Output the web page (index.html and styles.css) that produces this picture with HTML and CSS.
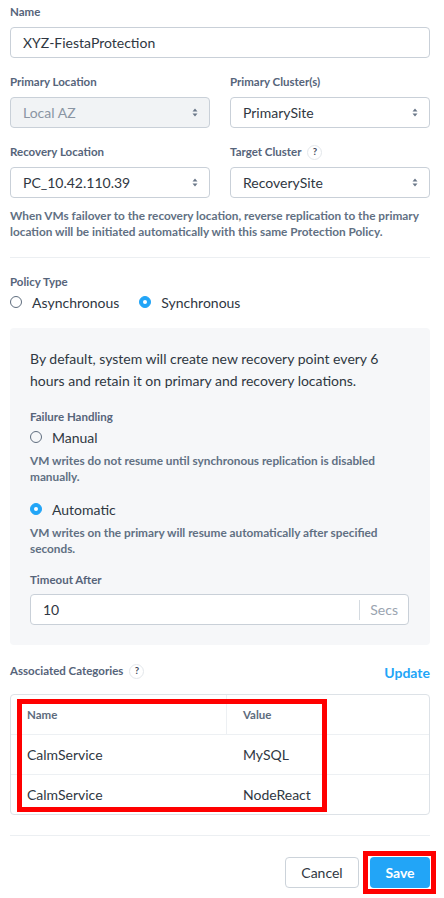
FILE: index.html
```html
<!DOCTYPE html>
<html>
<head>
<meta charset="utf-8">
<link rel="stylesheet" href="styles.css">
</head>
<body>
<div class="form">
  <div class="lbl">Name</div>
  <div class="input">XYZ-FiestaProtection</div>

  <div class="row2">
    <div class="col">
      <div class="lbl">Primary Location</div>
      <div class="select disabled"><span>Local AZ</span>
        <svg class="arrows" width="6" height="9" viewBox="0 0 6 9"><path d="M3 0.5L5.5 3.5H0.5Z M3 8.5L5.5 5.5H0.5Z" fill="#6b7889"/></svg>
      </div>
    </div>
    <div class="col">
      <div class="lbl">Primary Cluster(s)</div>
      <div class="select"><span>PrimarySite</span>
        <svg class="arrows" width="6" height="9" viewBox="0 0 6 9"><path d="M3 0.5L5.5 3.5H0.5Z M3 8.5L5.5 5.5H0.5Z" fill="#6b7889"/></svg>
      </div>
    </div>
  </div>

  <div class="row2">
    <div class="col">
      <div class="lbl">Recovery Location</div>
      <div class="select"><span>PC_10.42.110.39</span>
        <svg class="arrows" width="6" height="9" viewBox="0 0 6 9"><path d="M3 0.5L5.5 3.5H0.5Z M3 8.5L5.5 5.5H0.5Z" fill="#6b7889"/></svg>
      </div>
    </div>
    <div class="col">
      <div class="lbl">Target Cluster <span class="help">?</span></div>
      <div class="select"><span>RecoverySite</span>
        <svg class="arrows" width="6" height="9" viewBox="0 0 6 9"><path d="M3 0.5L5.5 3.5H0.5Z M3 8.5L5.5 5.5H0.5Z" fill="#6b7889"/></svg>
      </div>
    </div>
  </div>

  <p class="hint first">When VMs failover to the recovery location, reverse replication to the primary location will be initiated automatically with this same Protection Policy.</p>

  <hr class="divider">

  <div class="lbl policy">Policy Type</div>
  <div class="radios">
    <label class="radio"><span class="dot"></span>Asynchronous</label>
    <label class="radio"><span class="dot on"></span>Synchronous</label>
  </div>

  <div class="panel">
    <p class="desc">By default, system will create new recovery point every 6 hours and retain it on primary and recovery locations.</p>
    <div class="lbl fh">Failure Handling</div>
    <label class="radio opt"><span class="dot"></span>Manual</label>
    <p class="hint sub">VM writes do not resume until synchronous replication is disabled manually.</p>
    <label class="radio opt auto"><span class="dot on"></span>Automatic</label>
    <p class="hint sub">VM writes on the primary will resume automatically after specified seconds.</p>
    <div class="lbl timeout">Timeout After</div>
    <div class="input suffix-input"><span class="val">10</span><span class="suffix">Secs</span></div>
  </div>

  <div class="cat-head">
    <div class="lbl">Associated Categories <span class="help">?</span></div>
    <a class="update">Update</a>
  </div>

  <div class="table">
    <div class="tr th"><div class="td name">Name</div><div class="td val">Value</div></div>
    <div class="tr"><div class="td name">CalmService</div><div class="td val">MySQL</div></div>
    <div class="tr"><div class="td name">CalmService</div><div class="td val">NodeReact</div></div>
    <div class="mark"></div>
  </div>

  <hr class="divider bottom">

  <div class="actions">
    <button class="btn cancel">Cancel</button>
    <div class="save-mark"><button class="btn save">Save</button></div>
  </div>
</div>
</body>
</html>
```

FILE: styles.css
```css
* { box-sizing: border-box; }
html, body { margin: 0; padding: 0; background: #fff; }
body {
  font-family: "Lato", "Open Sans", sans-serif;
  color: #2e3440;
  width: 444px;
}
.form {
  width: 420px;
  margin-left: 10px;
  padding-top: 5px;
}
.lbl {
  font-size: 11.5px;
  font-weight: 700;
  color: #56647a;
  line-height: 14px;
  height: 14px;
  display: flex;
  align-items: center;
}
.input {
  margin-top: 8px;
  height: 31px;
  border: 1px solid #c9d0d8;
  border-radius: 4px;
  padding: 0 12px;
  display: flex;
  align-items: center;
  font-size: 14px;
  color: #2f3742;
  background: #fff;
}
.row2 {
  display: grid;
  grid-template-columns: 200px 200px;
  column-gap: 20px;
  margin-top: 17px;
}
.select {
  margin-top: 8px;
  height: 31px;
  border: 1px solid #c9d0d8;
  border-radius: 4px;
  padding: 0 10px 0 12px;
  display: flex;
  align-items: center;
  justify-content: space-between;
  font-size: 14px;
  color: #2f3742;
  background: #fff;
}
.select.disabled {
  background: #f1f3f5;
  color: #8a95a3;
}
.arrows { display: block; margin-right: 1px; }
.help {
  display: inline-flex;
  align-items: center;
  justify-content: center;
  width: 15px;
  height: 15px;
  border: 1px solid #e3e7eb;
  border-radius: 50%;
  font-size: 9.5px;
  font-weight: 700;
  color: #3e4a5a;
  margin-left: 6px;
}
.hint {
  margin: 0;
  font-size: 11.8px;
  font-weight: 700;
  color: #617083;
  line-height: 15.5px;
}
.hint.first { margin-top: 10px; }
.divider {
  border: 0;
  border-top: 1px solid #eceff2;
  margin: 18px 0 0 0;
  height: 0;
}
.lbl.policy { margin-top: 17px; }
.radios {
  display: flex;
  margin-top: 4px;
  gap: 20px;
}
.radio {
  display: flex;
  align-items: center;
  height: 18px;
  font-size: 14px;
  color: #2f3742;
}
.dot {
  width: 12px;
  height: 12px;
  border-radius: 50%;
  border: 1px solid #5f6d7e;
  margin-right: 10px;
  position: relative;
  flex: none;
}
.dot.on {
  background: #22a5f7;
  border-color: #22a5f7;
}
.dot.on::after {
  content: "";
  position: absolute;
  left: 3px;
  top: 3px;
  width: 4px;
  height: 4px;
  border-radius: 50%;
  background: #fff;
}
.panel {
  margin-top: 17px;
  background: #f6f7f9;
  border-radius: 4px;
  padding: 20px 21px 20px 20px;
}
.desc {
  margin: 0;
  font-size: 14px;
  line-height: 22px;
  color: #2f3742;
}
.lbl.fh { margin-top: 18px; }
.radio.opt { margin-top: 4px; }
.radio.opt.auto { margin-top: 16px; }
.hint.sub { margin-top: 7px; }
.lbl.timeout { margin-top: 17px; }
.suffix-input {
  margin-top: 7px;
  padding-right: 10px;
  justify-content: space-between;
}
.suffix {
  border-left: 1px solid #d4dae0;
  height: 20px;
  display: flex;
  align-items: center;
  padding-left: 10px;
  color: #9aa4b0;
  font-size: 14px;
}
.cat-head {
  margin-top: 19px;
  display: flex;
  justify-content: space-between;
  align-items: center;
  height: 14px;
}
.update {
  font-size: 14px;
  font-weight: 700;
  color: #22a5f7;
  margin-top: 2px;
}
.table {
  margin-top: 16px;
  border: 1px solid #dde2e7;
  border-radius: 4px;
  position: relative;
}
.tr {
  display: grid;
  grid-template-columns: 216px 1fr;
  height: 40px;
  border-top: 1px solid #edf0f3;
  align-items: center;
}
.tr:first-child { border-top: 0; height: 39px; }
.td {
  padding-left: 16px;
  font-size: 14px;
  color: #2f3742;
  height: 100%;
  display: flex;
  align-items: center;
}
.th .td {
  font-size: 11.5px;
  font-weight: 700;
  color: #5d6b7d;
}
.th .td.name { border-right: 1px solid #edf0f3; }
.mark {
  position: absolute;
  left: 6px;
  top: 4px;
  width: 310px;
  height: 113px;
  border: 5px solid #ff0000;
  pointer-events: none;
}
.divider.bottom { margin-top: 20px; }
.actions {
  display: flex;
  justify-content: flex-end;
  align-items: center;
  margin-top: 15px;
  margin-right: -6px;
}
.btn {
  font-family: inherit;
  height: 31px;
  border-radius: 4px;
  font-size: 14px;
  padding: 0;
  display: block;
}
.cancel {
  width: 74px;
  border: 1px solid #ccd3da;
  background: #fff;
  color: #2f3742;
  margin-right: 4px;
}
.save-mark {
  border: 5px solid #ff0000;
  padding: 1px 1px 1px 2px;
}
.save {
  width: 60px;
  border: 0;
  background: #22a5f7;
  color: #fff;
  font-weight: 700;
}
```
